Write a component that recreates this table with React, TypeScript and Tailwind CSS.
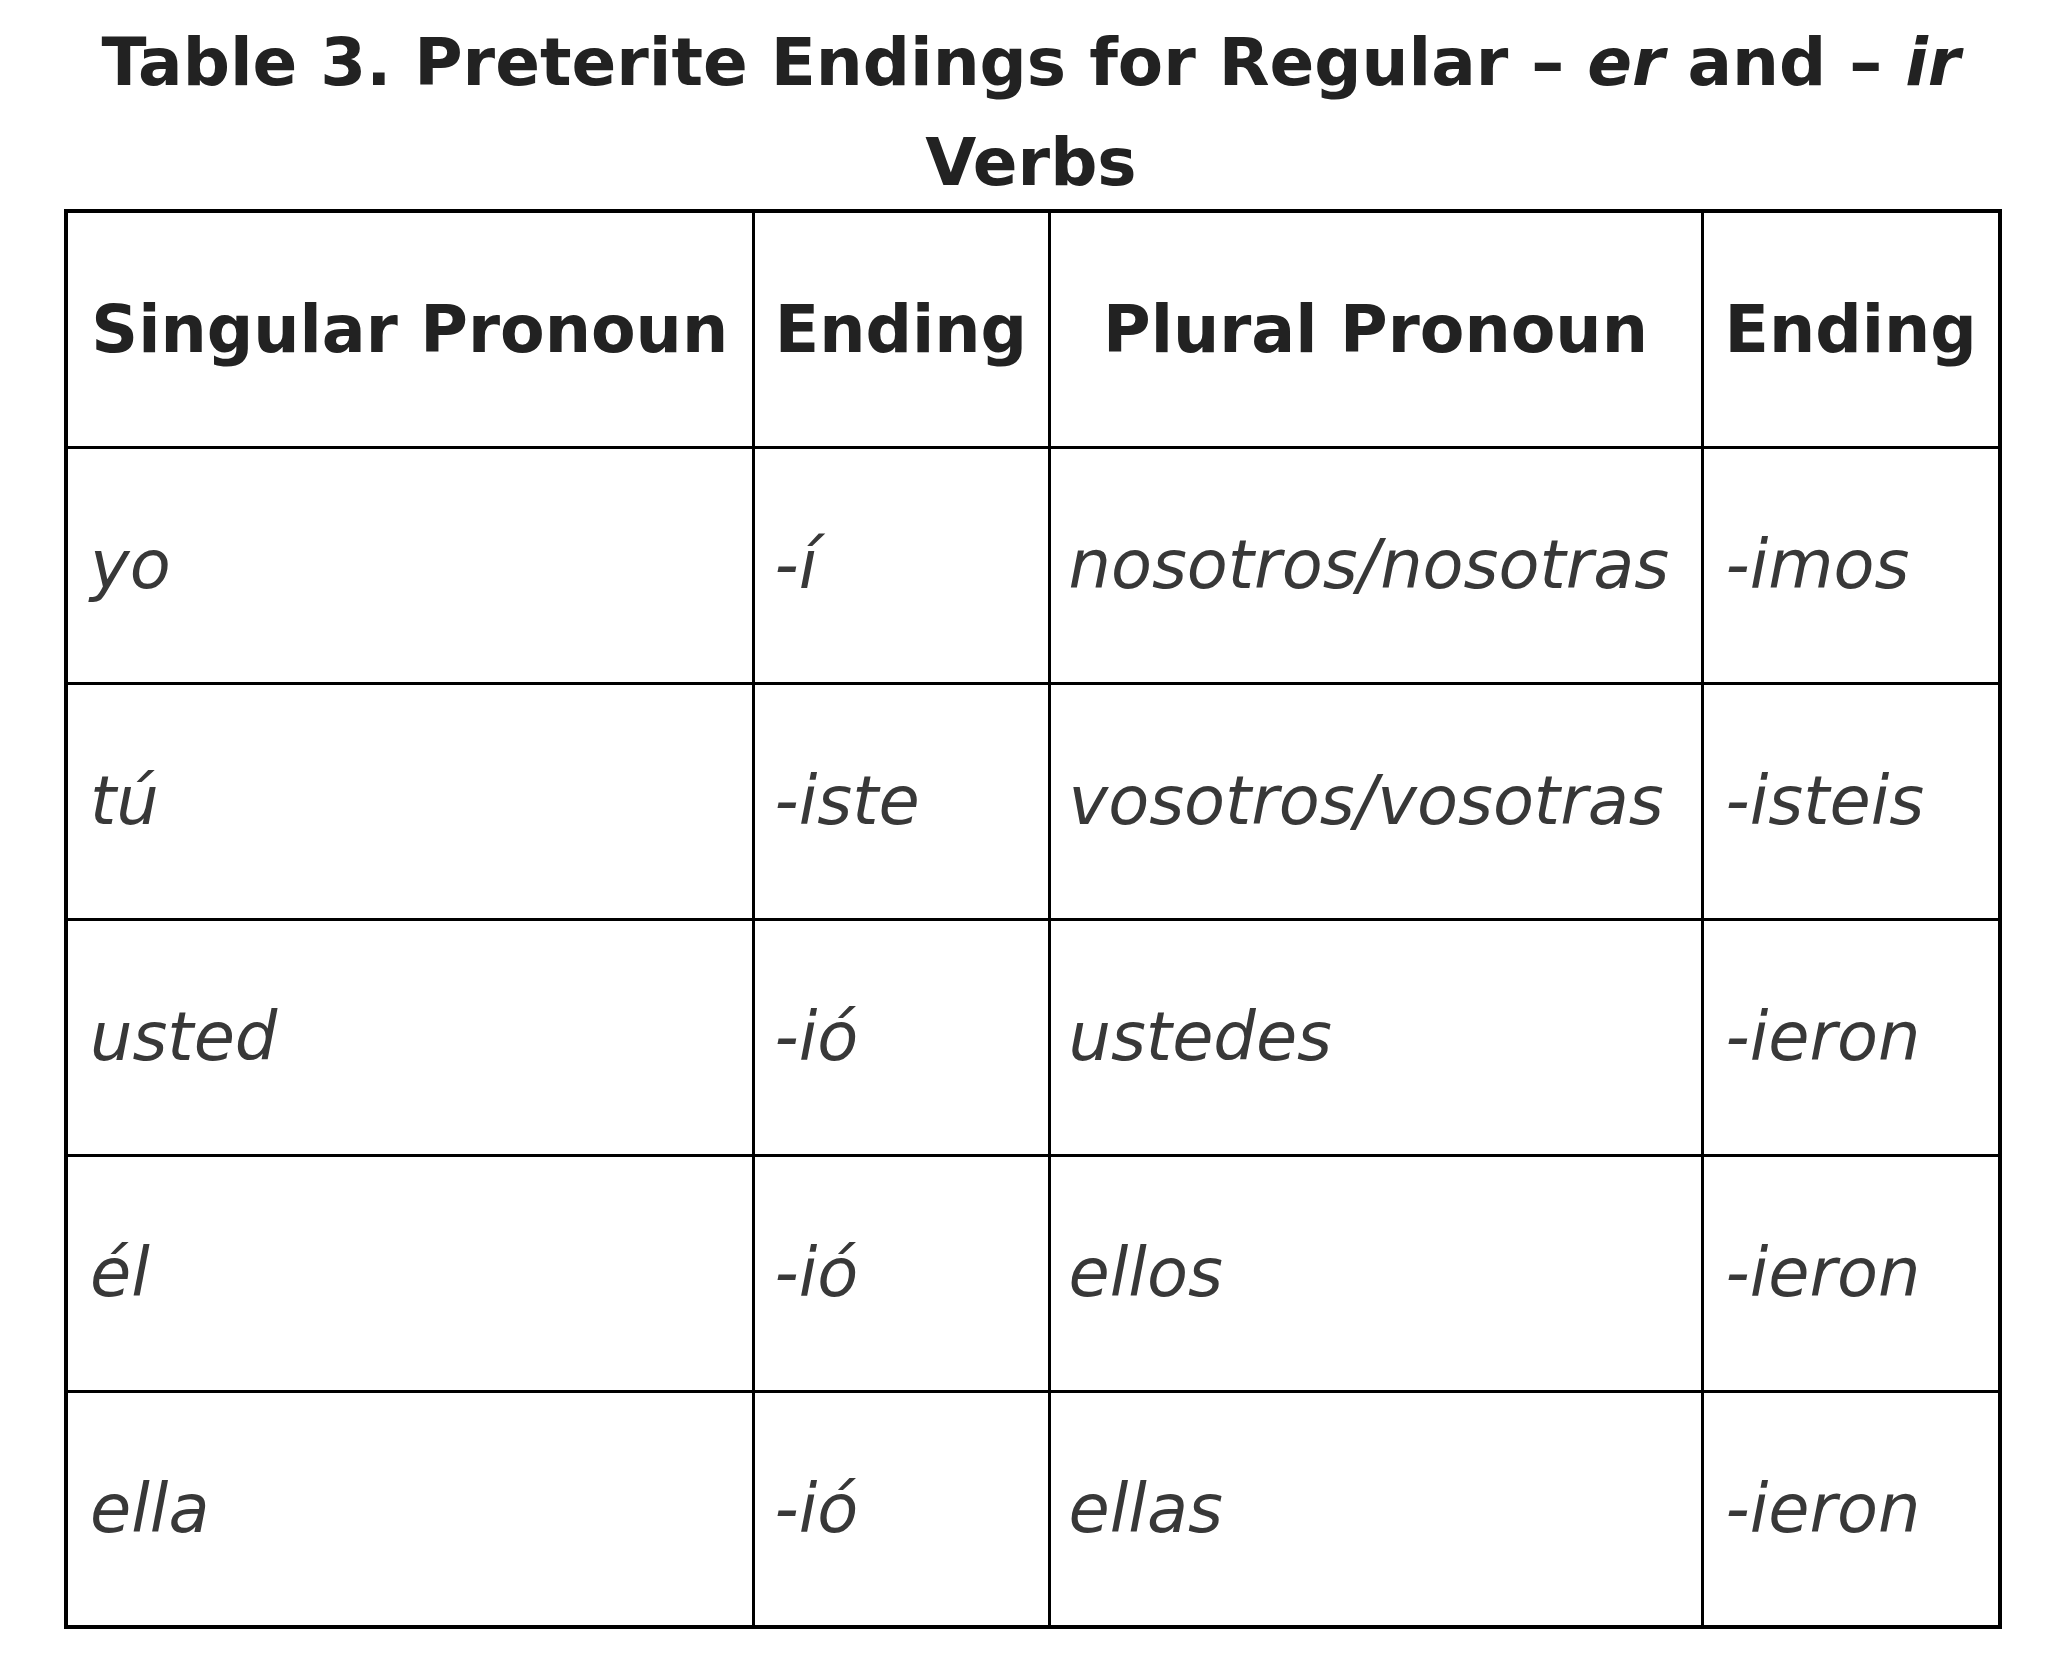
const rows = [
  ['yo', '-í', 'nosotros/nosotras', '-imos'],
  ['tú', '-iste', 'vosotros/vosotras', '-isteis'],
  ['usted', '-ió', 'ustedes', '-ieron'],
  ['él', '-ió', 'ellos', '-ieron'],
  ['ella', '-ió', 'ellas', '-ieron'],
];

const font = { fontFamily: '"DejaVu Sans", Verdana, sans-serif' };

export default function App() {
  return (
    <div className="min-h-screen bg-white" style={font}>
      <div className="w-[1934px] ml-[64px]">
        {/* Caption */}
        <h2 className="pt-[13px] text-center text-[66px] leading-[100px] font-bold text-[#222]">
          Table 3. Preterite Endings for Regular – <em>er</em> and – <em>ir</em> Verbs
        </h2>

        <table className="-mt-[4px] w-[1934px] table-fixed border-collapse border-[4px] border-black">
          <colgroup>
            <col className="w-[687px]" />
            <col className="w-[296px]" />
            <col className="w-[653px]" />
            <col className="w-[298px]" />
          </colgroup>
          <thead>
            <tr className="h-[236px]">
              <th className="border-[3px] border-black px-2 text-center text-[65px] font-bold text-[#222] whitespace-nowrap">
                Singular Pronoun
              </th>
              <th className="border-[3px] border-black px-2 text-center text-[65px] font-bold text-[#222] whitespace-nowrap">
                Ending
              </th>
              <th className="border-[3px] border-black px-2 text-center text-[65px] font-bold text-[#222] whitespace-nowrap">
                Plural Pronoun
              </th>
              <th className="border-[3px] border-black px-2 text-center text-[65px] font-bold text-[#222] whitespace-nowrap">
                Ending
              </th>
            </tr>
          </thead>
          <tbody>
            {rows.map((r) => (
              <tr key={r[0]} className="h-[236px]">
                <td className="border-[3px] border-black pl-[22px] text-[67px] italic text-[#383838] whitespace-nowrap">{r[0]}</td>
                <td className="border-[3px] border-black pl-[20px] text-[67px] italic text-[#383838] whitespace-nowrap">{r[1]}</td>
                <td className="border-[3px] border-black pl-[18px] text-[67px] italic text-[#383838] whitespace-nowrap">{r[2]}</td>
                <td className="border-[3px] border-black pl-[22px] text-[67px] italic text-[#383838] whitespace-nowrap">{r[3]}</td>
              </tr>
            ))}
          </tbody>
        </table>
      </div>
    </div>
  );
}
